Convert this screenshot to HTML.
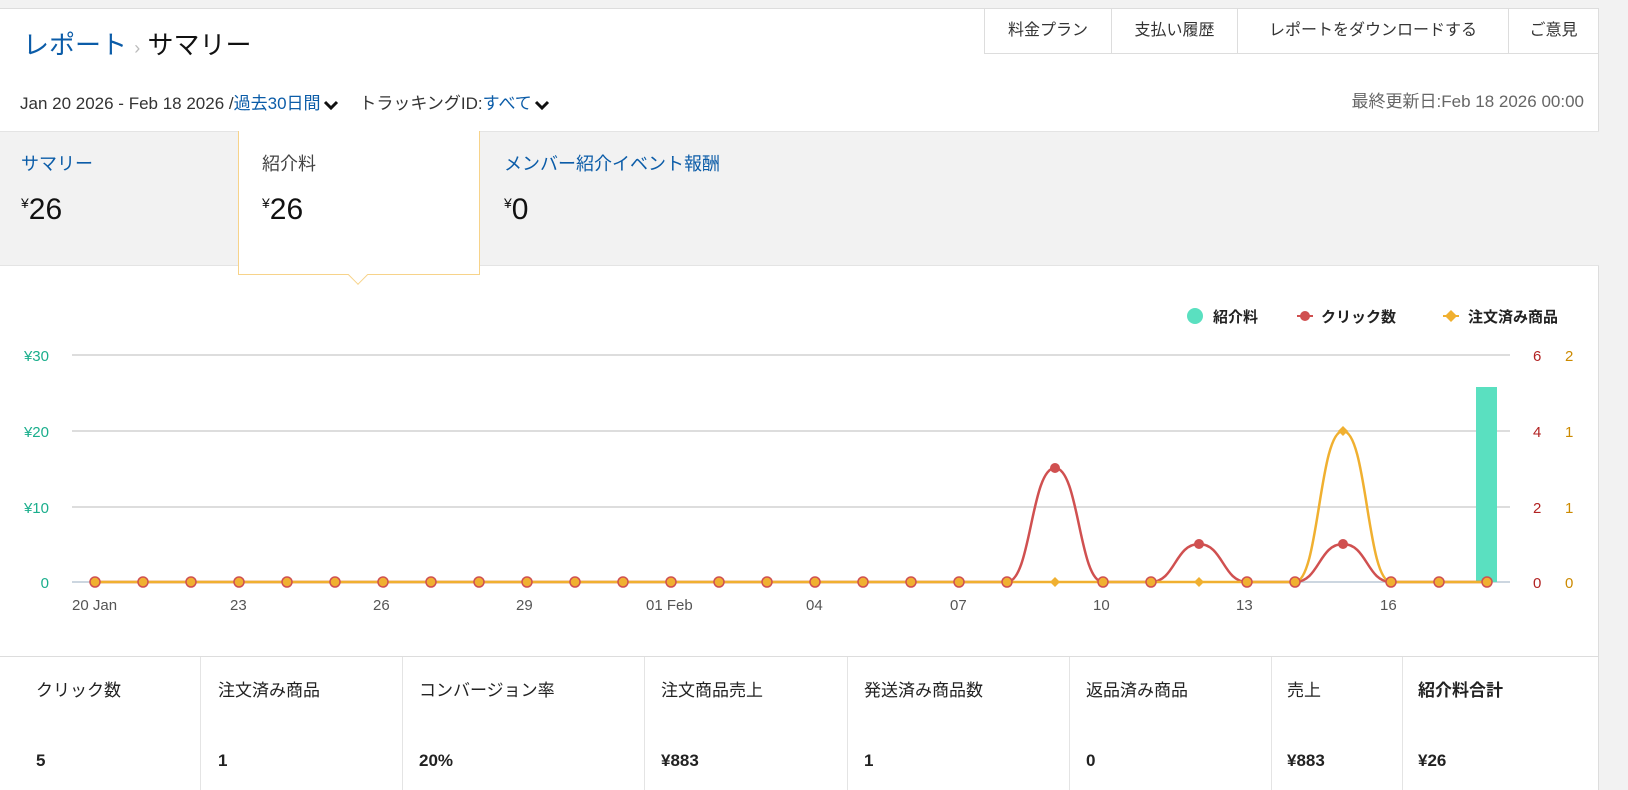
<!DOCTYPE html>
<html><head><meta charset="utf-8"><style>
*{margin:0;padding:0;box-sizing:border-box}
body{width:1628px;height:790px;background:#f2f2f2;font-family:"Liberation Sans","Noto Sans CJK JP",sans-serif;position:relative;overflow:hidden;color:#111}
.a{position:absolute;white-space:nowrap}
.blue{color:#0b5ca8}
.chev{display:inline-block;vertical-align:middle;margin:0 2px}
</style></head><body>
<div class="a" style="left:0;top:8px;width:1599px;height:782px;background:#fff;border-top:1px solid #ddd;border-right:1px solid #ddd"></div>
<div class="a" style="left:23px;top:25px;font-size:26px"><span class="blue">レポート</span> <span style="color:#bbb;font-size:18px">›</span> サマリー</div>
<div class="a" style="left:984px;top:8px;width:615px;height:46px;border:1px solid #ddd;border-top:none;display:flex;font-size:16px;color:#333">
<div style="width:127px;text-align:center;line-height:45px;border-right:1px solid #ddd">料金プラン</div>
<div style="width:126px;text-align:center;line-height:45px;border-right:1px solid #ddd">支払い履歴</div>
<div style="width:271px;text-align:center;line-height:45px;border-right:1px solid #ddd">レポートをダウンロードする</div>
<div style="flex:1;text-align:center;line-height:45px">ご意見</div></div>
<div class="a" style="left:20px;top:89px;font-size:17px;color:#333">Jan 20 2026 - Feb 18 2026 /<span class="blue">過去30日間</span><svg class="chev" width="16" height="12" viewBox="0 0 16 12"><path d="M2,3 L8,9 L14,3" fill="none" stroke="#111" stroke-width="3"/></svg>&nbsp;&nbsp;&nbsp; トラッキングID:<span class="blue">すべて</span><svg class="chev" width="16" height="12" viewBox="0 0 16 12"><path d="M2,3 L8,9 L14,3" fill="none" stroke="#111" stroke-width="3"/></svg></div>
<div class="a" style="right:44px;top:87px;font-size:17px;color:#666">最終更新日:Feb 18 2026 00:00</div>
<div class="a" style="left:0;top:131px;width:1599px;height:135px;background:#f2f2f2;border-top:1px solid #e4e4e4;border-bottom:1px solid #e4e4e4"></div>
<div class="a" style="left:238px;top:131px;width:242px;height:144px;background:#fff;border:1px solid #f7d38a;border-top:none"></div>
<div class="a" style="left:351px;top:268px;width:14px;height:14px;background:#fff;border-right:1px solid #f7d38a;border-bottom:1px solid #f7d38a;transform:rotate(45deg)"></div>
<div class="a blue" style="left:21px;top:150px;font-size:18px">サマリー</div>
<div class="a" style="left:21px;top:193px;font-size:30px"><sup style="font-size:14px">¥</sup>26</div>
<div class="a" style="left:262px;top:150px;font-size:18px;color:#444">紹介料</div>
<div class="a" style="left:262px;top:193px;font-size:30px"><sup style="font-size:14px">¥</sup>26</div>
<div class="a blue" style="left:504px;top:150px;font-size:18px">メンバー紹介イベント報酬</div>
<div class="a" style="left:504px;top:193px;font-size:30px"><sup style="font-size:14px">¥</sup>0</div>
<svg class="a" style="left:0;top:0" width="1628" height="790" font-family="Liberation Sans, Noto Sans CJK JP, sans-serif">
<g stroke="#ddd" stroke-width="2"><line x1="72" y1="355" x2="1510" y2="355"/><line x1="72" y1="431" x2="1510" y2="431"/><line x1="72" y1="507" x2="1510" y2="507"/></g>
<line x1="72" y1="582" x2="1510" y2="582" stroke="#ccd6e0" stroke-width="2"/>
<g fill="#1aae8c" font-size="15" text-anchor="end"><text x="49" y="361">¥30</text><text x="49" y="437">¥20</text><text x="49" y="513">¥10</text><text x="49" y="588">0</text></g>
<g fill="#b22222" font-size="15"><text x="1533" y="361">6</text><text x="1533" y="437">4</text><text x="1533" y="513">2</text><text x="1533" y="588">0</text></g>
<g fill="#cc8a00" font-size="15"><text x="1565" y="361">2</text><text x="1565" y="437">1</text><text x="1565" y="513">1</text><text x="1565" y="588">0</text></g>
<rect x="1476" y="387" width="21" height="195" fill="#5ae0c0"/>
<g fill="#555" font-size="15"><text x="72" y="610">20 Jan</text><text x="230" y="610">23</text><text x="373" y="610">26</text><text x="516" y="610">29</text><text x="646" y="610">01 Feb</text><text x="806" y="610">04</text><text x="950" y="610">07</text><text x="1093" y="610">10</text><text x="1236" y="610">13</text><text x="1380" y="610">16</text></g>
<path d="M95,582 L1007,582 C1031,582 1031,468 1055,468 C1079,468 1079,582 1103,582 L1151,582 C1175,582 1175,544 1199,544 C1223,544 1223,582 1247,582 L1295,582 C1319,582 1319,544 1343,544 C1367,544 1367,582 1391,582 L1487,582" fill="none" stroke="#d05050" stroke-width="2.5"/>
<path d="M95,582 L1295,582 C1319,582 1319,431 1343,431 C1367,431 1367,582 1391,582 L1487,582" fill="none" stroke="#f0b030" stroke-width="2.5"/>
<g fill="#f0b030" stroke="#d05050" stroke-width="1.5">
<circle cx="95" cy="582" r="5"/><circle cx="143" cy="582" r="5"/><circle cx="191" cy="582" r="5"/><circle cx="239" cy="582" r="5"/><circle cx="287" cy="582" r="5"/><circle cx="335" cy="582" r="5"/><circle cx="383" cy="582" r="5"/><circle cx="431" cy="582" r="5"/><circle cx="479" cy="582" r="5"/><circle cx="527" cy="582" r="5"/><circle cx="575" cy="582" r="5"/><circle cx="623" cy="582" r="5"/><circle cx="671" cy="582" r="5"/><circle cx="719" cy="582" r="5"/><circle cx="767" cy="582" r="5"/><circle cx="815" cy="582" r="5"/><circle cx="863" cy="582" r="5"/><circle cx="911" cy="582" r="5"/><circle cx="959" cy="582" r="5"/><circle cx="1007" cy="582" r="5"/><circle cx="1103" cy="582" r="5"/><circle cx="1151" cy="582" r="5"/><circle cx="1247" cy="582" r="5"/><circle cx="1295" cy="582" r="5"/><circle cx="1391" cy="582" r="5"/><circle cx="1439" cy="582" r="5"/><circle cx="1487" cy="582" r="5"/></g>
<g fill="#d05050"><circle cx="1055" cy="468" r="5"/><circle cx="1199" cy="544" r="5"/><circle cx="1343" cy="544" r="5"/></g>
<g fill="#f0b030"><path d="M1055,577 l5,5 -5,5 -5,-5z"/><path d="M1199,577 l5,5 -5,5 -5,-5z"/><path d="M1343,426 l5,5 -5,5 -5,-5z"/></g>
<circle cx="1195" cy="316" r="8" fill="#5ae0c0"/>
<line x1="1297" y1="316" x2="1313" y2="316" stroke="#d05050" stroke-width="2"/><circle cx="1305" cy="316" r="5" fill="#d05050"/>
<line x1="1443" y1="316" x2="1459" y2="316" stroke="#f0b030" stroke-width="2"/><path d="M1451,310 l6,6 -6,6 -6,-6z" fill="#f0b030"/>
<g font-size="15" font-weight="bold" fill="#222"><text x="1213" y="322">紹介料</text><text x="1321" y="322">クリック数</text><text x="1468" y="322">注文済み商品</text></g>
</svg>
<div class="a" style="left:0;top:656px;width:1599px;border-top:1px solid #ddd"></div>
<div class="a" style="left:0;top:657px;width:1599px;height:133px;display:flex;font-size:17px;color:#222">
<div style="width:201px;padding:19px 36px;border-right:1px solid #e4e4e4">クリック数<br><b style="display:block;margin-top:50px">5</b></div>
<div style="width:202px;padding:19px 17px;border-right:1px solid #e4e4e4">注文済み商品<br><b style="display:block;margin-top:50px">1</b></div>
<div style="width:242px;padding:19px 16px;border-right:1px solid #e4e4e4">コンバージョン率<br><b style="display:block;margin-top:50px">20%</b></div>
<div style="width:203px;padding:19px 16px;border-right:1px solid #e4e4e4">注文商品売上<br><b style="display:block;margin-top:50px">¥883</b></div>
<div style="width:222px;padding:19px 16px;border-right:1px solid #e4e4e4">発送済み商品数<br><b style="display:block;margin-top:50px">1</b></div>
<div style="width:202px;padding:19px 16px;border-right:1px solid #e4e4e4">返品済み商品<br><b style="display:block;margin-top:50px">0</b></div>
<div style="width:131px;padding:19px 15px;border-right:1px solid #e4e4e4">売上<br><b style="display:block;margin-top:50px">¥883</b></div>
<div style="flex:1;padding:19px 15px"><b>紹介料合計</b><br><b style="display:block;margin-top:50px">¥26</b></div>
</div>
</body></html>
